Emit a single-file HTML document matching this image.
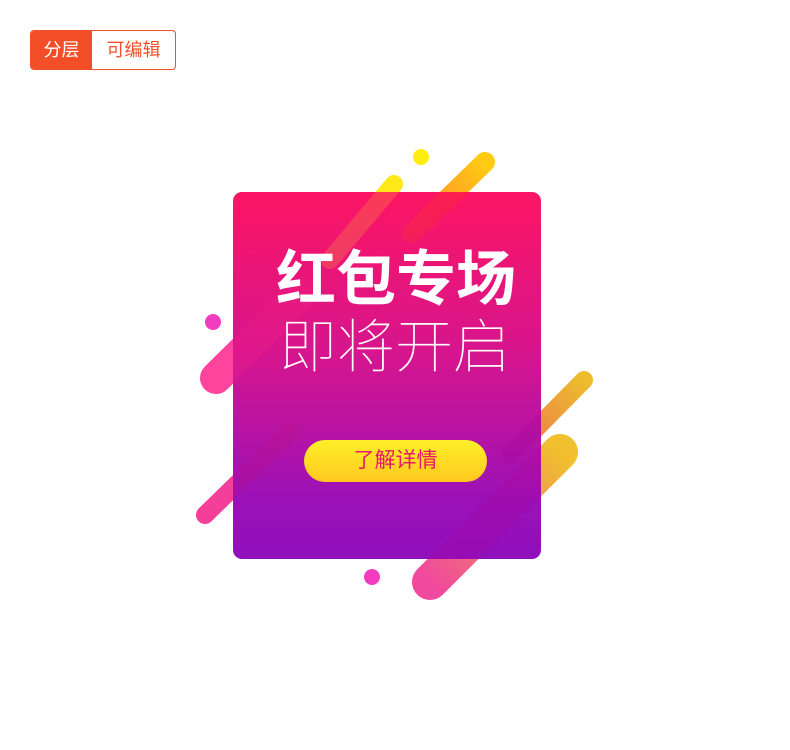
<!DOCTYPE html>
<html><head><meta charset="utf-8"><style>
body{margin:0;width:790px;height:750px;background:#fff;position:relative;overflow:hidden;font-family:"Liberation Sans","Noto Sans CJK SC",sans-serif}
.badge{position:absolute;left:30px;top:30px;width:144px;height:38px;border:1px solid #f0502c;border-radius:4px;overflow:hidden;display:flex;font-size:18px;line-height:38px}
.badge .a{width:61px;background:#f24e28;color:#fff;text-align:center}
.badge .b{flex:1;color:#f0502c;text-align:center}
svg{position:absolute;left:0;top:0}
.card{position:absolute;left:233px;top:192px;width:308px;height:367px;border-radius:9px;background:linear-gradient(#fc1563,#d5158f 45%,#9a11b8 85%,#9010bc)}
.t1{position:absolute;left:276px;width:260px;text-align:left;color:#fff;font-size:60px;white-space:nowrap}
.btn{position:absolute;left:304px;top:440px;width:183px;height:42px;border-radius:21px;background:linear-gradient(#fff02a,#ffc81e);color:#e8176a;text-align:center;line-height:42px;font-size:21px}
</style></head><body>
<div class="badge"><div class="a">分层</div><div class="b">可编辑</div></div>
<svg width="790" height="750">
<defs>
<linearGradient id="oy" x1="0" y1="1" x2="1" y2="0"><stop offset="0" stop-color="#ff5aa0"/><stop offset="1" stop-color="#ffec18"/></linearGradient>
<linearGradient id="yo" x1="0" y1="1" x2="1" y2="0"><stop offset="0" stop-color="#ff8a40"/><stop offset="1" stop-color="#ffe818"/></linearGradient>
</defs>
<g stroke-linecap="round" fill="none">
<line x1="330" y1="260" x2="394" y2="184" stroke="#ffe818" stroke-width="18"/>
<line x1="412" y1="233" x2="485" y2="162" stroke="url(#yo)" stroke-width="20"/>
<line x1="216" y1="378" x2="300" y2="295" stroke="#ff4aa4" stroke-width="32"/>
<line x1="205" y1="515" x2="290" y2="432" stroke="#ff4aa4" stroke-width="18"/>
<line x1="510" y1="455" x2="584" y2="380" stroke="url(#yo)" stroke-width="18"/>
<line x1="430" y1="582" x2="560" y2="452" stroke="url(#oy)" stroke-width="36"/>
</g>
<circle cx="421" cy="157" r="8" fill="#ffec10"/>
<circle cx="213" cy="322" r="8" fill="#f23cc0"/>
<circle cx="372" cy="577" r="8" fill="#f23cc0"/>
</svg>
<div class="card"></div>
<svg width="790" height="750" style="opacity:.18">
<g stroke-linecap="round" fill="none">
<line x1="330" y1="260" x2="394" y2="184" stroke="#ffe818" stroke-width="18"/>
<line x1="412" y1="233" x2="485" y2="162" stroke="#ff5000" stroke-width="20"/>
<line x1="216" y1="378" x2="300" y2="295" stroke="#ff2a84" stroke-width="32"/>
<line x1="205" y1="515" x2="290" y2="432" stroke="#c01070" stroke-width="18"/>
<line x1="510" y1="455" x2="584" y2="380" stroke="#a00090" stroke-width="18"/>
<line x1="430" y1="582" x2="560" y2="452" stroke="#b00090" stroke-width="36"/>
</g></svg>
<div class="t1" style="top:240px;font-weight:bold;line-height:80px">红包专场</div>
<div class="t1" style="top:304px;left:279px;font-size:58px;font-weight:100;line-height:76px;font-family:'Noto Sans CJK SC',sans-serif">即将开启</div>
<div class="btn">了解详情</div>
</body></html>
